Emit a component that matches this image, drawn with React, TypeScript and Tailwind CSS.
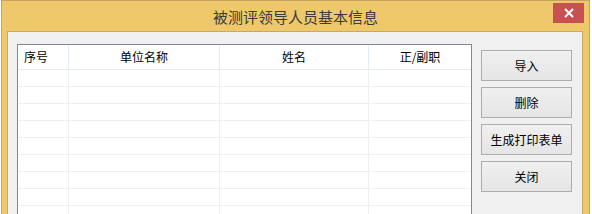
import React from "react";

const columns = [
  { title: "序号", width: "w-[51px]", align: "justify-start pl-[6px]" },
  { title: "单位名称", width: "w-[151px]", align: "justify-center" },
  { title: "姓名", width: "w-[149px]", align: "justify-center" },
  { title: "正/副职", width: "flex-1", align: "justify-center" },
];

const buttons = ["导入", "删除", "生成打印表单", "关闭"];

export default function App() {
  const rows = Array.from({ length: 10 });

  return (
    <div
      className="w-[592px] h-[214px] overflow-hidden bg-white"
      style={{ fontFamily: '"Noto Sans CJK SC", "Microsoft YaHei", sans-serif' }}
    >
      <div className="ml-px w-[589px] h-[260px] flex flex-col border border-[#c6a45f] bg-[#efc86c]">
        {/* ── Title bar ── */}
        <div className="relative h-[30px] shrink-0 flex items-center justify-center">
          <span className="text-[15px] leading-none text-[#3b3b3b] mt-[1px]">
            被测评领导人员基本信息
          </span>
          <button className="absolute right-[5px] top-[2px] w-[31px] h-[20px] bg-[#c75050] flex items-center justify-center">
            <svg width="10" height="10" viewBox="0 0 10 10">
              <path d="M1 1 L9 9 M9 1 L1 9" stroke="white" strokeWidth="2" />
            </svg>
          </button>
        </div>

        {/* ── Client area ── */}
        <div className="ml-[5px] mr-[6px] flex-1 min-h-0 border border-[#c9a864] bg-[#f0f0f0] flex pt-[12px] pl-[9px] pr-[10px] gap-[9px]">
          {/* table */}
          <div className="w-[455px] h-[200px] shrink-0 border border-[#828790] bg-white flex flex-col overflow-hidden">
            <div className="h-[25px] flex border-b border-[#e3ebf7] shrink-0">
              {columns.map((c, i) => (
                <div
                  key={c.title}
                  className={`${c.width} flex items-center ${c.align} text-[12px] text-black ${
                    i < 3 ? "border-r border-[#e3ebf7]" : ""
                  }`}
                >
                  {c.title}
                </div>
              ))}
            </div>
            {rows.map((_, r) => (
              <div key={r} className="h-[17px] flex border-b border-[#efefef] shrink-0">
                {columns.map((c, i) => (
                  <div
                    key={c.title}
                    className={`${c.width} ${i < 3 ? "border-r border-[#efefef]" : ""}`}
                  />
                ))}
              </div>
            ))}
          </div>

          {/* buttons */}
          <div className="flex flex-col gap-[6px] pt-[6px]">
            {buttons.map((b) => (
              <button
                key={b}
                className="w-[91px] h-[31px] shrink-0 border border-[#adadad] bg-gradient-to-b from-[#f0f0f0] to-[#e5e5e5] text-[12px] text-black flex items-center justify-center"
              >
                {b}
              </button>
            ))}
          </div>
        </div>
      </div>
    </div>
  );
}
